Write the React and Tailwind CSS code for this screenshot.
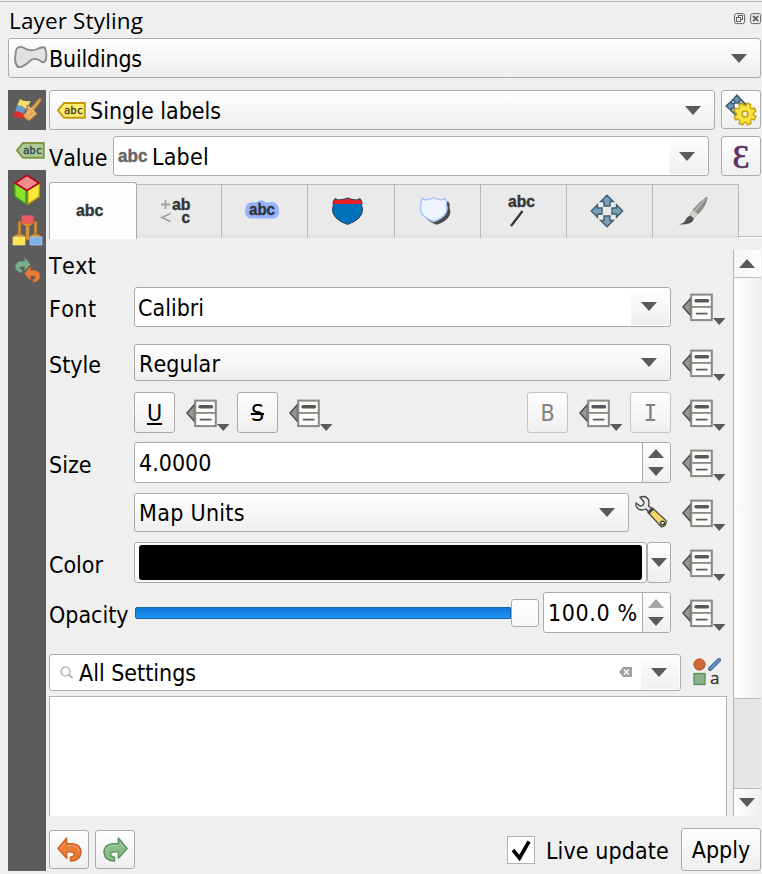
import React from 'react';

const BORDER = 'border border-[#ababab] rounded-[3px]';
const RAISED = 'bg-linear-to-b from-[#fefefe] to-[#efefef]';

function Arrow({ up = false, color = '#5a5a5a', w = 16, h = 9 }) {
  return (
    <svg width={w} height={h} viewBox="0 0 16 9" className="shrink-0" preserveAspectRatio="none">
      <path d={up ? 'M0 9L8 0L16 9Z' : 'M0 0H16L8 9Z'} fill={color} />
    </svg>
  );
}

function Override() {
  return (
    <svg width="44" height="41" viewBox="0.5 -0.6 44 41" className="shrink-0">
      <path d="M9 12L1.5 20.5L9 29Z" fill="#96979a" stroke="#4c4d50" strokeWidth="1.5" />
      <rect x="9.7" y="8" width="20.6" height="25.5" fill="#fbfbfa" stroke="#888980" strokeWidth="2" />
      <path d="M9 20.3H31" stroke="#888980" strokeWidth="1.8" />
      <path d="M14.5 14.2H26" stroke="#58585a" strokeWidth="3.4" strokeLinecap="round" />
      <path d="M14.3 27H26" stroke="#58585a" strokeWidth="1.7" />
      <path d="M31.5 31.5H44L37.7 38.5Z" fill="#5a5a5a" />
    </svg>
  );
}

function Tag({ fill, stroke, ink }) {
  return (
    <svg width="29" height="17" viewBox="0 0 29 17" className="shrink-0">
      <path d="M7 1H27.8V15.8H7L1 8.4Z" fill={fill} stroke={stroke} strokeWidth="1.9" />
      <text x="7" y="12" fontSize="10.5" fontFamily="DejaVu Sans Mono, monospace" fill={ink} textLength="19" stroke={ink} strokeWidth="0.3">abc</text>
    </svg>
  );
}

function Combo({ className, children, arrowPad = 'pr-[13px]', panel = false }) {
  return (
    <div className={`flex shrink-0 items-center ${BORDER} ${panel ? 'bg-white' : RAISED} ${className}`}>
      {children}
      <div className="grow" />
      {panel ? (
        <div className={`m-px flex w-[38px] items-center justify-center self-stretch pr-[3px] ${RAISED}`}>
          <Arrow />
        </div>
      ) : (
        <div className={arrowPad}><Arrow /></div>
      )}
    </div>
  );
}

function Btn({ className = '', children }) {
  return <button className={`flex shrink-0 items-center justify-center ${RAISED} ${BORDER} ${className}`}>{children}</button>;
}

function Spin({ className, value, upColor }) {
  return (
    <div className={`flex h-[41px] items-stretch bg-white ${BORDER} ${className}`}>
      <div className="flex grow items-center pt-px pl-1">{value}</div>
      <div className={`flex w-7 flex-col items-center justify-center gap-[9px] rounded-r-[3px] border-l border-[#ababab] pr-px ${RAISED}`}>
        <Arrow up color={upColor} />
        <Arrow />
      </div>
    </div>
  );
}

function Row({ label, className = '', children }) {
  return (
    <div className={`flex h-[41px] shrink-0 items-center ${className}`}>
      <div className="w-[85px] shrink-0 pt-[4px]">{label}</div>
      {children}
    </div>
  );
}

const HOOK = 'M1 12L10 1V7H16Q25 8 25 16Q24 25 14 25V21Q19 20 18 17Q17 15 10 15.5V22Z';

function Hook({ color, edge, light, flip = false, size = 25 }) {
  return (
    <svg width={size} height={size} viewBox="0 0 26 26">
      <g transform={flip ? 'translate(26 0) scale(-1 1)' : undefined}>
        <path d={HOOK} fill={color} stroke={edge} strokeWidth="1.5" strokeLinejoin="round" />
        <path d="M3.5 12L8.5 6M10.5 9H16Q22 10 23 15" fill="none" stroke={light} strokeWidth="0.7" />
      </g>
    </svg>
  );
}

function Brush() {
  return (
    <svg width="30" height="26" viewBox="0 0 30 26">
      <path d="M8 2Q12 5 19 4L14 12Q9 8 5 9Z" fill="#f3e06a" />
      <path d="M5 8Q9 8 14 12L11 17Q7 14 3 15Z" fill="#6c98c9" />
      <path d="M3 14Q7 14 12 17L10 23Q6 19 1 20Z" fill="#e02d2f" />
      <path d="M19 11L27 2Q28 0 29 2Q30 3 22 13L25 17L17 24Q13 22 11 18Q16 15 15 8Z" fill="#dfa75c" stroke="#b37a35" strokeWidth="1" />
      <path d="M16 9L24 17M13.5 20Q16 18 18 14M17 22Q20 19 21 17" fill="none" stroke="#f4d18e" strokeWidth="1" />
    </svg>
  );
}

function Cube() {
  return (
    <svg width="28" height="31" viewBox="0 0 28 31">
      <path d="M1.5 9L13 16V30L2 22.5Z" fill="#8be32d" stroke="#469b12" strokeWidth="1.4" />
      <path d="M26.5 9L15 16V30L26 22.5Z" fill="#fdea3f" stroke="#c4a50a" strokeWidth="1.4" />
      <path d="M14 1.3L26 9L14 16.5L2 9Z" fill="#f28b8f" stroke="#ad0d16" strokeWidth="1.9" />
    </svg>
  );
}

function Brushes() {
  return (
    <svg width="31" height="31" viewBox="0 0 31 31">
      <path d="M13.5 10H17.5V25H13.5Z M6 6H9V20H6Z M22 6H25V20H22Z" fill="#d29442" stroke="#97621c" strokeWidth="0.8" />
      <path d="M10 8H21V9L18 11H13L10 9Z M2 21L5 19H10L13 21V23H2Z M18 21L21 19H26L29 21V23H18Z" fill="#d29442" stroke="#97621c" strokeWidth="0.6" />
      <rect x="9.5" y="0.5" width="12" height="8" fill="#ef5a60" />
      <rect x="1" y="22" width="12" height="8" fill="#fae54f" stroke="#e8dca0" strokeWidth="0.7" />
      <rect x="18" y="22" width="12" height="8" fill="#80b0e6" stroke="#b5cfec" strokeWidth="0.7" />
    </svg>
  );
}

function Move() {
  return (
    <svg width="34" height="34" viewBox="0 0 34 34">
      {[0, 90, 180, 270].map((a) => (
        <path key={a} d="M17 1.3L23.3 7.5H20V12H14V7.5H10.7Z" transform={`rotate(${a} 17 17)`} fill="#7f9fb6" stroke="#3c5e75" strokeWidth="1.4" />
      ))}
    </svg>
  );
}

function GearMove() {
  return (
    <svg width="32" height="32" viewBox="0 0 32 32">
      {[0, 90, 180, 270].map((a) => (
        <path key={a} d="M12 1L17 6.5H14.5V9H9.500V6.500H7Z" transform={`rotate(${a} 12 12)`} fill="#6f93ad" stroke="#3c5e75" strokeWidth="1.300" />
      ))}
      {[22, 67, 112, 157, 202, 247, 292, 337].map((a) => (
        <path key={a} d="M17 14L18.3 9H21.7L23 14Z" transform={`rotate(${a} 20 20)`} fill="#f9e340" stroke="#c6a410" strokeWidth="1.5" />
      ))}
      <circle cx="20" cy="20" r="7.7" fill="#f9e340" />
      <circle cx="20" cy="20" r="2.9" fill="#f7f3dc" stroke="#c6a410" strokeWidth="1.5" />
    </svg>
  );
}

const SHIELD = 'M4 1.5Q7 4 10.5 2.5Q13 2.5 16.5 1Q20 2.5 22.5 2.5Q26 4 29 1.5L31 5Q30 7 31.5 12Q32 22 16.5 27.5Q1 22 1.5 12Q3 7 2 5Z';

function Tab({ className = 'w-[86px]', children }) {
  return (
    <div className={`mt-0.5 flex h-[54px] shrink-0 items-center justify-center border-t border-r border-[#b9b9b9] bg-linear-to-b from-[#eaeaea] from-85% to-[#e2e2e2] ${className}`}>
      {children}
    </div>
  );
}

const IconText = ({ children, ...p }) => (
  <text fontFamily="Liberation Sans, Arial, sans-serif" fontWeight="700" fontSize="17" fill="#2f3638" stroke="#2f3638" strokeWidth="0.4" lengthAdjust="spacingAndGlyphs" {...p}>{children}</text>
);

function Tabs() {
  return (
    <div className="mt-1.5 flex h-[58px] shrink-0">
      <div className="flex h-[57px] w-[88px] shrink-0 items-center justify-center rounded-t-[3px] border border-b-0 border-[#ababab] bg-[#fdfdfd]">
        <svg width="30" height="24" viewBox="0 0 30 24" className="mr-1.5 mb-px overflow-visible"><IconText x="1" y="17" textLength="27.5">abc</IconText></svg>
      </div>
      <Tab className="w-[85px]">
        <svg width="32" height="34" viewBox="0 0 32 34" className="mr-1.5 overflow-visible">
          <path d="M1 9.5H10M5.500 5V14" stroke="#a0a0a0" strokeWidth="1.8" />
          <path d="M10.5 18.5L2 22.500L10.500 26.500" fill="none" stroke="#a0a0a0" strokeWidth="1.8" />
          <IconText x="12" y="14.5" fontSize="16" textLength="18.5">ab</IconText>
          <IconText x="21.500" y="28" fontSize="16" textLength="8.5">c</IconText>
        </svg>
      </Tab>
      <Tab>
        <svg width="36" height="24" viewBox="0 0 36 24" className="mr-1.5 mb-[3px]">
          <path d="M7 4.5Q9 4 12 4.5Q17 0 22 4.5L29 4Q35 6 35 13Q35 20 30 20.5L6 20.5Q1 19 1 14Q1 5 7 4.5Z" fill="#98b3fb" />
          <IconText x="5" y="16.5" fontSize="16" textLength="26">abc</IconText>
        </svg>
      </Tab>
      <Tab className="w-[87px]">
        <svg width="33" height="29" viewBox="0 0 33 29" className="mr-[7px] mb-px">
          <path d={SHIELD} fill="#0072bc" />
          <path d="M4 1.5Q7 4 10.5 2.5Q13 2.5 16.5 1Q20 2.5 22.5 2.5Q26 4 29 1.5L31 5L30.5 7H2.5L2 5Z" fill="#ee1c25" />
          <path d={SHIELD} fill="none" stroke="#333b4a" strokeWidth="1" />
        </svg>
      </Tab>
      <Tab>
        <svg width="34" height="32" viewBox="0 0 34 32" className="mr-1.5">
          <path d={SHIELD} transform="translate(4 4) scale(0.9)" fill="#4b4b4b" />
          <path d={SHIELD} transform="translate(1 1) scale(0.89)" fill="#eff4ff" stroke="#a9c5fa" strokeWidth="1.6" />
        </svg>
      </Tab>
      <Tab>
        <svg width="32" height="38" viewBox="0 0 32 38" className="mr-1.5 mb-px overflow-visible">
          <IconText x="3" y="15" textLength="27">abc</IconText>
          <path d="M17.5 19L6 34" stroke="#2f3638" strokeWidth="2.2" />
        </svg>
      </Tab>
      <Tab><div className="mr-1.5 mb-0.5"><Move /></div></Tab>
      <Tab>
        <svg width="30" height="30" viewBox="0 0 30 30" className="mr-1.5 mb-px">
          <path d="M29 1Q29 9 20 18L15 14Q22 5 29 1Z" fill="#8e8f89" stroke="#777872" strokeWidth="0.6" />
          <path d="M27 3L17 15" stroke="#b6b7b2" strokeWidth="1.5" />
          <path d="M15 14L20 18L16 22L12 19Z" fill="#d2d3cf" stroke="#a3a49f" strokeWidth="0.6" />
          <path d="M12 19.5L16 22.5Q15 29 1 28.5Q7 27 8 23Q10 20 12 19.5Z" fill="#51524c" />
        </svg>
      </Tab>
      <div className="mt-[54px] h-0.5 w-[23px] border-t border-[#b9b9b9] bg-white" />
    </div>
  );
}

function Wrench() {
  return (
    <svg width="34" height="34" viewBox="0 0 34 34" className="shrink-0">
      <path d="M18.5 13L32 25.5Q33 31 27.5 32L14 17.5Z" fill="#f1d76b" stroke="#4a4632" strokeWidth="1.2" />
      <path d="M6 2Q13 0 15 6Q15 9 14.5 11L19 14.5L15.5 18L12 14Q5 17 2 11V8L6 11Q10 11 10 7Z" fill="#e6e8e8" stroke="#444" strokeWidth="1.3" strokeLinejoin="round" />
      <path d="M15 17L18.5 13" stroke="#444" strokeWidth="2.5" />
      <circle cx="28.5" cy="28" r="1.9" fill="#fff" stroke="#333" strokeWidth="1.3" />
    </svg>
  );
}

export default function App() {
  return (
    <div className="flex h-[874px] w-[762px] flex-col overflow-hidden bg-[#efefef] pt-px font-['DejaVu_Sans_Condensed','DejaVu_Sans',sans-serif] text-[23px] leading-[30px] whitespace-nowrap text-black [font-kerning:none]">
      <div className="flex h-[37px] shrink-0 items-center border-t border-[#b4b4b4] pl-[9px]">
        <span className="pt-0.5 font-['Open_Sans',sans-serif] text-[22.5px] tracking-[0.15px] [font-kerning:normal]">Layer Styling</span>
        <div className="grow" />
        <svg width="28" height="12" viewBox="0 0 28 12" className="mb-0.5" fill="none" stroke="#626262">
          <rect x="0.6" y="0.6" width="10" height="10" rx="2" />
          <rect x="4.5" y="2.5" width="4" height="4" />
          <rect x="2.5" y="4.5" width="4" height="4" fill="#efefef" />
          <rect x="16.6" y="0.6" width="10" height="10" rx="2" />
          <path d="M19 3L24.2 8.2M24.2 3L19 8.2" strokeWidth="1.8" />
        </svg>
      </div>

      <Combo className="ml-2 h-10 w-[753px]">
        <svg width="34" height="25" viewBox="0 0 34 25" className="mb-px ml-[5px] shrink-0">
          <path d="M4 2.5Q7 1 10 3Q16 7 23 4Q29 1 31 3Q33 9 32 14Q31 18 28 17Q22 12 17 15Q9 23 4 22Q0 18 1.5 10Q1.5 4 4 2.5Z" fill="#e1e1e1" stroke="#8b8c86" strokeWidth="1.9" />
        </svg>
        <span className="pt-0.5 pl-px tracking-[-0.2px]">Buildings</span>
      </Combo>

      <div className="mt-3 flex h-[784px] pl-2">
        <div className="flex h-[781px] w-[38px] shrink-0 flex-col bg-[#5c5c5c]">
          <div className="flex h-10 items-center justify-center"><Brush /></div>
          <div className="flex h-10 items-center justify-end bg-[#efefef] pr-px">
            <Tag fill="#adc994" stroke="#7f9644" ink="#25404a" />
          </div>
          <div className="flex h-10 items-center justify-center pb-px"><Cube /></div>
          <div className="flex h-10 items-center justify-center"><Brushes /></div>
          <div className="flex h-10 items-center pl-1.5">
            <svg width="28" height="26" viewBox="0 0 28 26">
              <g transform="translate(17 0) scale(-0.62 0.62)"><path d={HOOK} fill="#7dae8c" stroke="#5b9270" /></g>
              <g transform="translate(10 9) scale(0.64)"><path d={HOOK} fill="#e87c3a" stroke="#d7662a" /></g>
            </svg>
          </div>
        </div>

        <div className="ml-[3px] flex w-[713px] flex-col">
          <div className="flex h-10 shrink-0 gap-1.5">
            <Combo className="h-10 w-[666px]">
              <div className="ml-[7px]"><Tag fill="#fdee73" stroke="#c29b0c" ink="#3b3826" /></div>
              <span className="pt-0.5 pl-1">Single labels</span>
            </Combo>
            <Btn className="h-[39px] w-10"><GearMove /></Btn>
          </div>
          <div className="mt-1.5 flex h-10 shrink-0 items-center">
            <span className="w-16 pt-[3px]">Value</span>
            <Combo panel className="h-10 w-[596px]">
              <svg width="32" height="24" viewBox="0 0 32 24" className="ml-[3px] shrink-0 overflow-visible">
                <IconText x="1" y="17.5" fontSize="17.5" textLength="29.5" fill="#666" stroke="#666">abc</IconText>
              </svg>
              <span className="pt-0.5 pl-[3px] tracking-[0.2px]">Label</span>
            </Combo>
            <Btn className="ml-3 h-10 w-10">
              <span className="pt-0.5 font-['Liberation_Serif',serif] text-[34px] text-[#5d3264] [-webkit-text-stroke:0.7px_#5d3264]">Ɛ</span>
            </Btn>
          </div>

          <Tabs />

          <div className="flex h-[576px] shrink-0">
            <div className="flex w-[684px] shrink-0 flex-col">
              <div className="mt-2.5 h-[30px] shrink-0 pt-px tracking-[0.4px]">Text</div>
              <Row label={<span className="tracking-[0.4px]">Font</span>} className="mt-[6px]">
                <Combo panel className="h-10 w-[537px]"><span className="pt-0.5 pl-[3px]">Calibri</span></Combo>
                <div className="ml-[11px] flex"><Override /></div>
              </Row>
              <Row label="Style" className="mt-[15px]">
                <Combo className="h-[37px] w-[537px]"><span className="pt-0.5 pl-1 tracking-[0.1px]">Regular</span></Combo>
                <div className="ml-[11px] flex"><Override /></div>
              </Row>
              <Row label="" className="mt-[9px]">
                <Btn className="h-[41px] w-[41px]"><span className="underline decoration-2 underline-offset-2">U</span></Btn>
                <div className="ml-[11px] flex"><Override /></div>
                <Btn className="ml-[7px] h-[41px] w-[41px]"><span className="line-through decoration-2">S</span></Btn>
                <div className="ml-[11px] flex"><Override /></div>
                <Btn className="ml-auto h-[41px] w-[41px] border-[#c4c4c4] text-[#828282]">B</Btn>
                <div className="ml-[11px] flex"><Override /></div>
                <Btn className="ml-[7px] h-[41px] w-[41px] border-[#c4c4c4] text-[#828282]">
                  <span className="font-['DejaVu_Sans_Mono',monospace]">I</span>
                </Btn>
                <div className="mr-[7px] ml-[11px] flex"><Override /></div>
              </Row>
              <Row label="Size" className="mt-[9px]">
                <Spin className="w-[537px]" value="4.0000" />
                <div className="ml-[11px] flex"><Override /></div>
              </Row>
              <Row label="" className="mt-[9px]">
                <Combo className="h-[39px] w-[495px]"><span className="pt-px pl-1 tracking-[0.3px]">Map Units</span></Combo>
                <div className="mr-[14px] ml-[5px] flex pb-0.5"><Wrench /></div>
                <Override />
              </Row>
              <Row label="Color" className="mt-[9px]">
                <div className={`h-[41px] w-[513px] bg-[#fbfbfb] px-1 pt-0.5 pb-[2px] ${BORDER}`}>
                  <div className="h-[35px] rounded-[3px] bg-black" />
                </div>
                <Btn className="h-[41px] w-6"><Arrow /></Btn>
                <div className="ml-[11px] flex"><Override /></div>
              </Row>
              <Row label="Opacity" className="mt-[9px]">
                <div className="ml-px h-3 w-[376px] rounded-l-[2px] border border-[#1762a5] bg-linear-to-b from-[#0e78d6] to-[#1c95f6]" />
                <div className={`h-7 w-7 shrink-0 bg-linear-to-b from-white to-[#f6f6f6] ${BORDER}`} />
                <div className="w-1" />
                <Spin className="w-[128px]" value={<span className="tracking-[0.6px]">100.0 %</span>} upColor="#a6a6a6" />
                <div className="ml-[11px] flex"><Override /></div>
              </Row>
              <div className="mt-[21px] flex h-[38px] shrink-0 items-start">
                <div className={`flex h-[37px] w-[632px] items-center bg-white ${BORDER}`}>
                  <svg width="13" height="13" viewBox="0 0 13 13" className="mb-px ml-[10px]" fill="none" stroke="#a0a0a0" strokeWidth="1.2">
                    <circle cx="5.5" cy="5.5" r="4.5" />
                    <path d="M8.5 8.5L12.5 12" strokeWidth="1.6" />
                  </svg>
                  <span className="pt-px pl-1.5">All Settings</span>
                  <div className="grow" />
                  <svg width="13" height="10" viewBox="0 0 13 10" className="mb-0.5">
                    <path d="M4 0H13V10H4L0 5Z" fill="#a0a0a0" />
                    <path d="M5 2.5L10 7.5M10 2.5L5 7.5" stroke="#fff" strokeWidth="1.5" />
                  </svg>
                  <div className={`m-px ml-[9px] flex w-[38px] items-center justify-center self-stretch pr-0.5 pb-px ${RAISED}`}><Arrow /></div>
                </div>
                <svg width="28" height="30" viewBox="0 0 28 30" className="mt-[3px] ml-3 overflow-visible">
                  <circle cx="6.5" cy="7.5" r="5.6" fill="#d1683a" stroke="#a34d21" />
                  <path d="M17 12L26 3" stroke="#335f91" strokeWidth="4" strokeLinecap="round" />
                  <path d="M17 12L26 3" stroke="#6d9bd0" strokeWidth="1.8" strokeLinecap="round" />
                  <rect x="1" y="16.5" width="11" height="11" fill="#8bb08c" stroke="#54915b" strokeWidth="1.3" />
                  <text x="17" y="27" fontSize="17" fontFamily="Open Sans, sans-serif" fill="#333" stroke="#333" strokeWidth="0.3">a</text>
                </svg>
              </div>
              <div className="mt-[4px] h-[120px] w-[678px] shrink-0 border border-b-0 border-[#b4b4b4] bg-white" />
            </div>

            <div className="mt-2.5 flex h-[566px] w-7 shrink-0 flex-col border-l border-[#b4b4b4] bg-[#e5e5e5]">
              <div className="flex h-7 items-center justify-center border-b border-[#bcbcbc] bg-linear-to-r from-[#f5f5f5] to-[#fefefe] pr-0.5"><Arrow up /></div>
              <div className="h-[421px] border-b border-[#bcbcbc] bg-linear-to-r from-[#fdfdfd] to-[#f0f0f0]" />
              <div className="grow" />
              <div className="flex h-7 items-center justify-center border-t border-[#bcbcbc] bg-linear-to-r from-[#fdfdfd] to-[#f0f0f0] pr-0.5"><Arrow /></div>
            </div>
          </div>

          <div className="mt-3 flex h-[43px] shrink-0 items-center">
            <Btn className="h-[39px] w-10"><Hook color="#e77e37" edge="#cf6326" light="#f6b47f" /></Btn>
            <Btn className="ml-1.5 h-[39px] w-10"><Hook flip color="#8bbd89" edge="#579460" light="#bfe0b9" /></Btn>
            <div className="grow" />
            <div className="flex h-7 w-7 items-center justify-center border border-[#b4b4b4] bg-white">
              <svg width="22" height="24" viewBox="0 0 22 24"><path d="M3 12L9.5 20L19 3.5" fill="none" stroke="#000" strokeWidth="3.6" /></svg>
            </div>
            <span className="w-[146px] pt-0.5 pl-[11px] tracking-[0.1px]">Live update</span>
            <Btn className="mr-px h-[43px] w-20">Apply</Btn>
          </div>
        </div>
      </div>
    </div>
  );
}
